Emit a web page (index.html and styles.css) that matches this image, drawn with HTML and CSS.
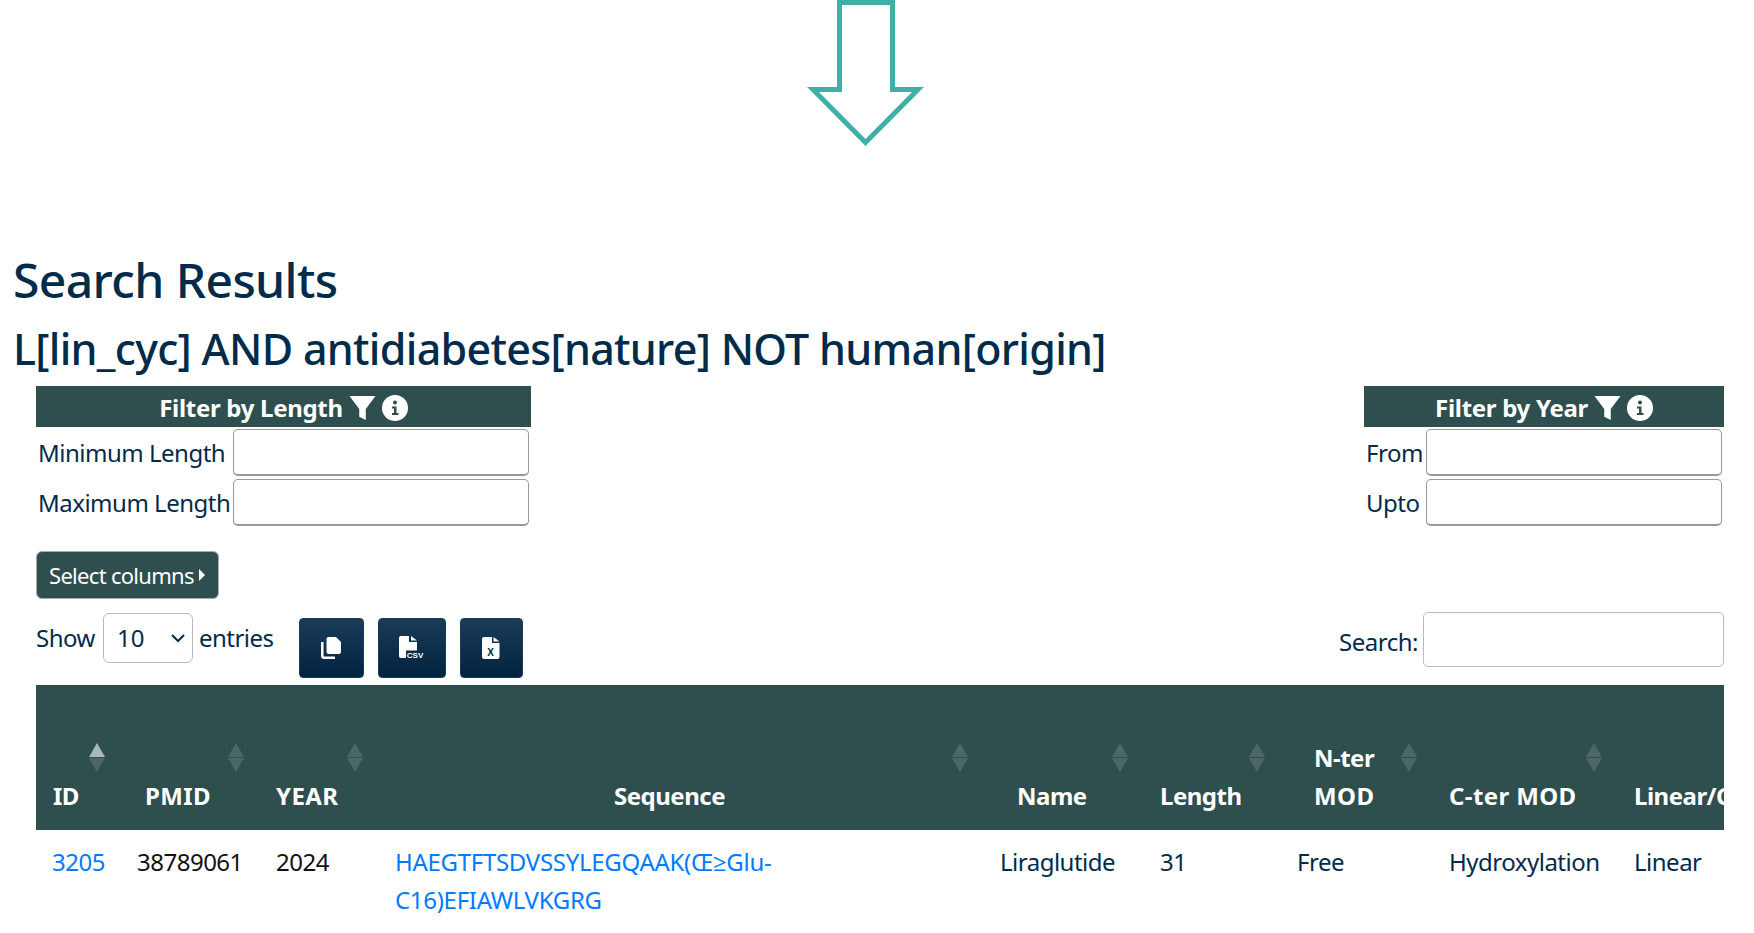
FILE: index.html
```html
<!DOCTYPE html>
<html lang="en">
<head>
    <meta charset="UTF-8">
    <meta name="viewport" content="width=device-width, initial-scale=1.0">
    <title>Search Results</title>
    <link rel="stylesheet" href="styles.css">
</head>
<body>
    <div class="arrow-row">
        <svg class="arrow" viewBox="0 0 118 147" width="118" height="147">
            <path d="M33.500 2.500H86.500V89.500H112L59.500 142.500L7 89.500H33.500Z" fill="none" stroke="#40b0a6" stroke-width="5"/>
        </svg>
    </div>

    <h1 class="title">Search Results</h1>
    <h2 class="query">L[lin_cyc] AND antidiabetes[nature] NOT human[origin]</h2>

    <div class="filters">
        <div class="filter filter-length">
            <div class="filter-head">
                Filter by Length
                <svg class="funnel" viewBox="0 0 24 24"><path d="M0 1H24L15 13V23L9 20V13Z" fill="#fff"/></svg>
                <svg class="info" viewBox="0 0 26 26"><circle cx="13" cy="13" r="13" fill="#fff"/><circle cx="13" cy="7.500" r="2" fill="#2f4f4f"/><path d="M10 11.500H14.500V18H16.500V20H10V18H12V13.500H10Z" fill="#2f4f4f"/></svg>
            </div>
            <div class="filter-row"><label>Minimum Length</label><input type="text"></div>
            <div class="filter-row"><label>Maximum Length</label><input type="text"></div>
        </div>
        <div class="filter filter-year">
            <div class="filter-head">
                Filter by Year
                <svg class="funnel" viewBox="0 0 24 24"><path d="M0 1H24L15 13V23L9 20V13Z" fill="#fff"/></svg>
                <svg class="info" viewBox="0 0 26 26"><circle cx="13" cy="13" r="13" fill="#fff"/><circle cx="13" cy="7.500" r="2" fill="#2f4f4f"/><path d="M10 11.500H14.500V18H16.500V20H10V18H12V13.500H10Z" fill="#2f4f4f"/></svg>
            </div>
            <div class="filter-row"><label>From</label><input type="text"></div>
            <div class="filter-row"><label>Upto</label><input type="text"></div>
        </div>
    </div>

    <div class="content">
        <button class="select-columns">Select columns<span class="caret"></span></button>

        <div class="toolbar">
            <div class="length">
                <span>Show</span>
                <select><option>10</option></select>
                <span>entries</span>
            </div>
            <div class="exports">
                <button class="export export-copy">
                    <svg viewBox="0 0 20 22" width="20" height="22"><path d="M7.500 0H15L20 5V15Q20 17 18 17H7.500Q5.500 17 5.500 15V2Q5.500 0 7.500 0Z" fill="#fff"/><path d="M1.300 5V18.700Q1.300 20.700 3.300 20.700H14" fill="none" stroke="#fff" stroke-width="2.600"/></svg>
                </button>
                <button class="export export-csv">
                    <svg viewBox="0 0 26 26" width="26" height="26"><path d="M2 1H10V7H18V15.500H7V23H2Q0 23 0 21V3Q0 1 2 1Z" fill="#fff"/><path d="M12 1L18 5.500H12Z" fill="#fff"/><text x="7.800" y="22.500" class="csv-text">CSV</text></svg>
                </button>
                <button class="export export-xls">
                    <svg viewBox="0 0 18 24" width="18" height="24"><path d="M2 1H10V7H17.500V21Q17.500 23 15.500 23H2Q0 23 0 21V3Q0 1 2 1Z" fill="#fff"/><path d="M11.500 1L17.500 5.500H11.500Z" fill="#fff"/><text x="8.700" y="19.500" class="xls-text">X</text></svg>
                </button>
            </div>
            <div class="search">
                <label>Search:</label>
                <input type="search">
            </div>
        </div>

        <div class="table-wrap">
            <table class="results">
                <colgroup>
                    <col class="c-id"><col class="c-pmid"><col class="c-year"><col class="c-seq"><col class="c-name">
                    <col class="c-len"><col class="c-nter"><col class="c-cter"><col class="c-lin">
                </colgroup>
                <thead>
                    <tr>
                        <th class="th-id sort-asc">ID</th>
                        <th class="th-pmid caps">PMID</th>
                        <th class="caps">YEAR</th>
                        <th class="th-seq">Sequence</th>
                        <th class="th-name">Name</th>
                        <th>Length</th>
                        <th class="th-nter">N-ter<br><span class="caps">MOD</span></th>
                        <th class="caps">C-ter MOD</th>
                        <th class="no-sort">Linear/Cyclic</th>
                    </tr>
                </thead>
                <tbody>
                    <tr>
                        <td><a href="#">3205</a></td>
                        <td>38789061</td>
                        <td>2024</td>
                        <td><a class="seq" href="#">HAEGTFTSDVSSYLEGQAAK(Œ≥Glu-C16)EFIAWLVKGRG</a></td>
                        <td>Liraglutide</td>
                        <td>31</td>
                        <td>Free</td>
                        <td>Hydroxylation</td>
                        <td>Linear</td>
                    </tr>
                </tbody>
            </table>
        </div>
    </div>
</body>
</html>
```

FILE: styles.css
```css
*{
    margin: 0;
    padding: 0;
    box-sizing: border-box;
}
body{
    font-family: "Noto Sans", "Open Sans", sans-serif;
    font-size: 24px;
    letter-spacing: -0.5px;
    line-height: 38px;
    color: #012b4a;
    background-color: #fff;
    overflow: hidden;
}
.arrow-row{
    display: flex;
    padding-left: 806px;
}
.arrow{
    display: block;
}
.title{
    margin: 104px 0 0 13px;
    font-size: 48px;
    line-height: 58px;
    font-weight: 500;
    letter-spacing: -0.6px;
}
.query{
    margin: 12px 0 0 13px;
    font-size: 43px;
    line-height: 56px;
    font-weight: 500;
    letter-spacing: -0.7px;
}
.filters{
    display: flex;
    justify-content: space-between;
    margin: 9px 30px 0 36px;
}
.filter-length{
    width: 495px;
}
.filter-year{
    width: 360px;
}
.filter-head{
    display: flex;
    justify-content: center;
    align-items: center;
    gap: 6px;
    height: 41px;
    padding-top: 2px;
    margin-bottom: 2px;
    background-color: #2f4f4f;
    color: #fff;
    font-weight: 700;
    letter-spacing: -0.3px;
}
.funnel{
    width: 27px;
    height: 26px;
}
.info{
    width: 26px;
    height: 26px;
}
.filter-row{
    display: flex;
    justify-content: space-between;
    align-items: center;
    padding: 0 2px;
    margin-bottom: 3px;
}
.filter-row input{
    width: 296px;
    height: 47px;
    border: 1px solid #999;
    border-bottom-width: 2px;
    border-radius: 5px;
}
.content{
    margin: 22px 30px 0 36px;
}
.select-columns{
    display: flex;
    align-items: center;
    height: 48px;
    padding: 0 13px 0 12px;
    background-color: #2f4f4f;
    color: #fff;
    border: 1px solid #aaa;
    border-radius: 6px;
    font: inherit;
    letter-spacing: -0.7px;
    font-size: 22px;
}
.caret{
    margin-left: 5px;
    border-left: 6px solid #fff;
    border-top: 6px solid transparent;
    border-bottom: 6px solid transparent;
}
.toolbar{
    display: flex;
    height: 73px;
    margin-top: 13px;
}
.length{
    display: flex;
    align-items: center;
    gap: 7px;
    height: 52px;
}
.length select{
    appearance: none;
    width: 90px;
    height: 50px;
    margin: 0 -1px 0 1px;
    padding-left: 13px;
    font: inherit;
    color: #012b4a;
    background: #fff url("data:image/svg+xml,%3Csvg xmlns='http://www.w3.org/2000/svg' viewBox='0 0 16 16'%3E%3Cpath d='M2 5l6 6 6-6' fill='none' stroke='%23012b4a' stroke-width='2'/%3E%3C/svg%3E") no-repeat right 6px center / 16px;
    border: 1px solid #bbb;
    border-radius: 6px;
}
.exports{
    display: flex;
    gap: 14px;
    margin: 6px 0 0 25px;
}
.export{
    display: flex;
    justify-content: center;
    align-items: center;
    height: 60px;
    background: linear-gradient(#1b3c59, #02233f);
    border: 1px solid #1b3c59;
    border-radius: 4px;
}
.export-copy{
    width: 65px;
}
.export-csv{
    width: 68px;
}
.export-xls{
    width: 63px;
}
.csv-text{
    font-family: "Liberation Sans", sans-serif;
    font-size: 8px;
    font-weight: 700;
    letter-spacing: 0;
    fill: #fff;
}
.xls-text{
    font-family: "Liberation Sans", sans-serif;
    font-size: 10px;
    font-weight: 700;
    letter-spacing: 0;
    fill: #02233f;
    text-anchor: middle;
}
.search{
    display: flex;
    align-items: center;
    gap: 5px;
    height: 55px;
    margin-left: auto;
}
.search label{
    padding-top: 4px;
}
.search input{
    width: 301px;
    height: 55px;
    border: 1px solid #bbb;
    border-radius: 5px;
}
.table-wrap{
    overflow: hidden;
}
.results{
    width: 1900px;
    table-layout: fixed;
    border-collapse: collapse;
}
.c-id{ width: 85px; }
.c-pmid{ width: 139px; }
.c-year{ width: 119px; }
.c-seq{ width: 605px; }
.c-name{ width: 160px; }
.c-len{ width: 137px; }
.c-nter{ width: 152px; }
.c-cter{ width: 185px; }
.c-lin{ width: 318px; }
.results th{
    position: relative;
    height: 145px;
    padding: 0 0 15px 16px;
    vertical-align: bottom;
    text-align: left;
    background-color: #2f4f4f;
    color: #fff;
    font-weight: 700;
    white-space: nowrap;
}
.results th::before,
.results th::after{
    content: "";
    position: absolute;
    right: 16px;
    border-left: 8px solid transparent;
    border-right: 8px solid transparent;
}
.results th::before{
    top: 58px;
    border-bottom: 14px solid rgba(255,255,255,.14);
}
.results th::after{
    top: 73px;
    border-top: 14px solid rgba(255,255,255,.14);
}
.results th.sort-asc::before{
    border-bottom-color: rgba(255,255,255,.6);
}
.results th.no-sort::before,
.results th.no-sort::after{
    display: none;
}
.caps{
    letter-spacing: 0.4px;
}
.results th.th-id{
    padding-left: 17px;
}
.results th.th-pmid{
    padding-left: 24px;
}
.results th.th-seq{
    padding-left: 235px;
}
.results th.th-name{
    padding-left: 33px;
}
.results th.th-nter{
    padding-left: 33px;
}
.results td{
    padding: 13px 16px;
    vertical-align: top;
    color: #012b4a;
}
.results td:nth-child(2),
.results td:nth-child(3){
    color: #111;
}
a{
    color: #007bff;
    text-decoration: none;
}
.seq{
    display: block;
    width: 420px;
    letter-spacing: -0.3px;
}
```
